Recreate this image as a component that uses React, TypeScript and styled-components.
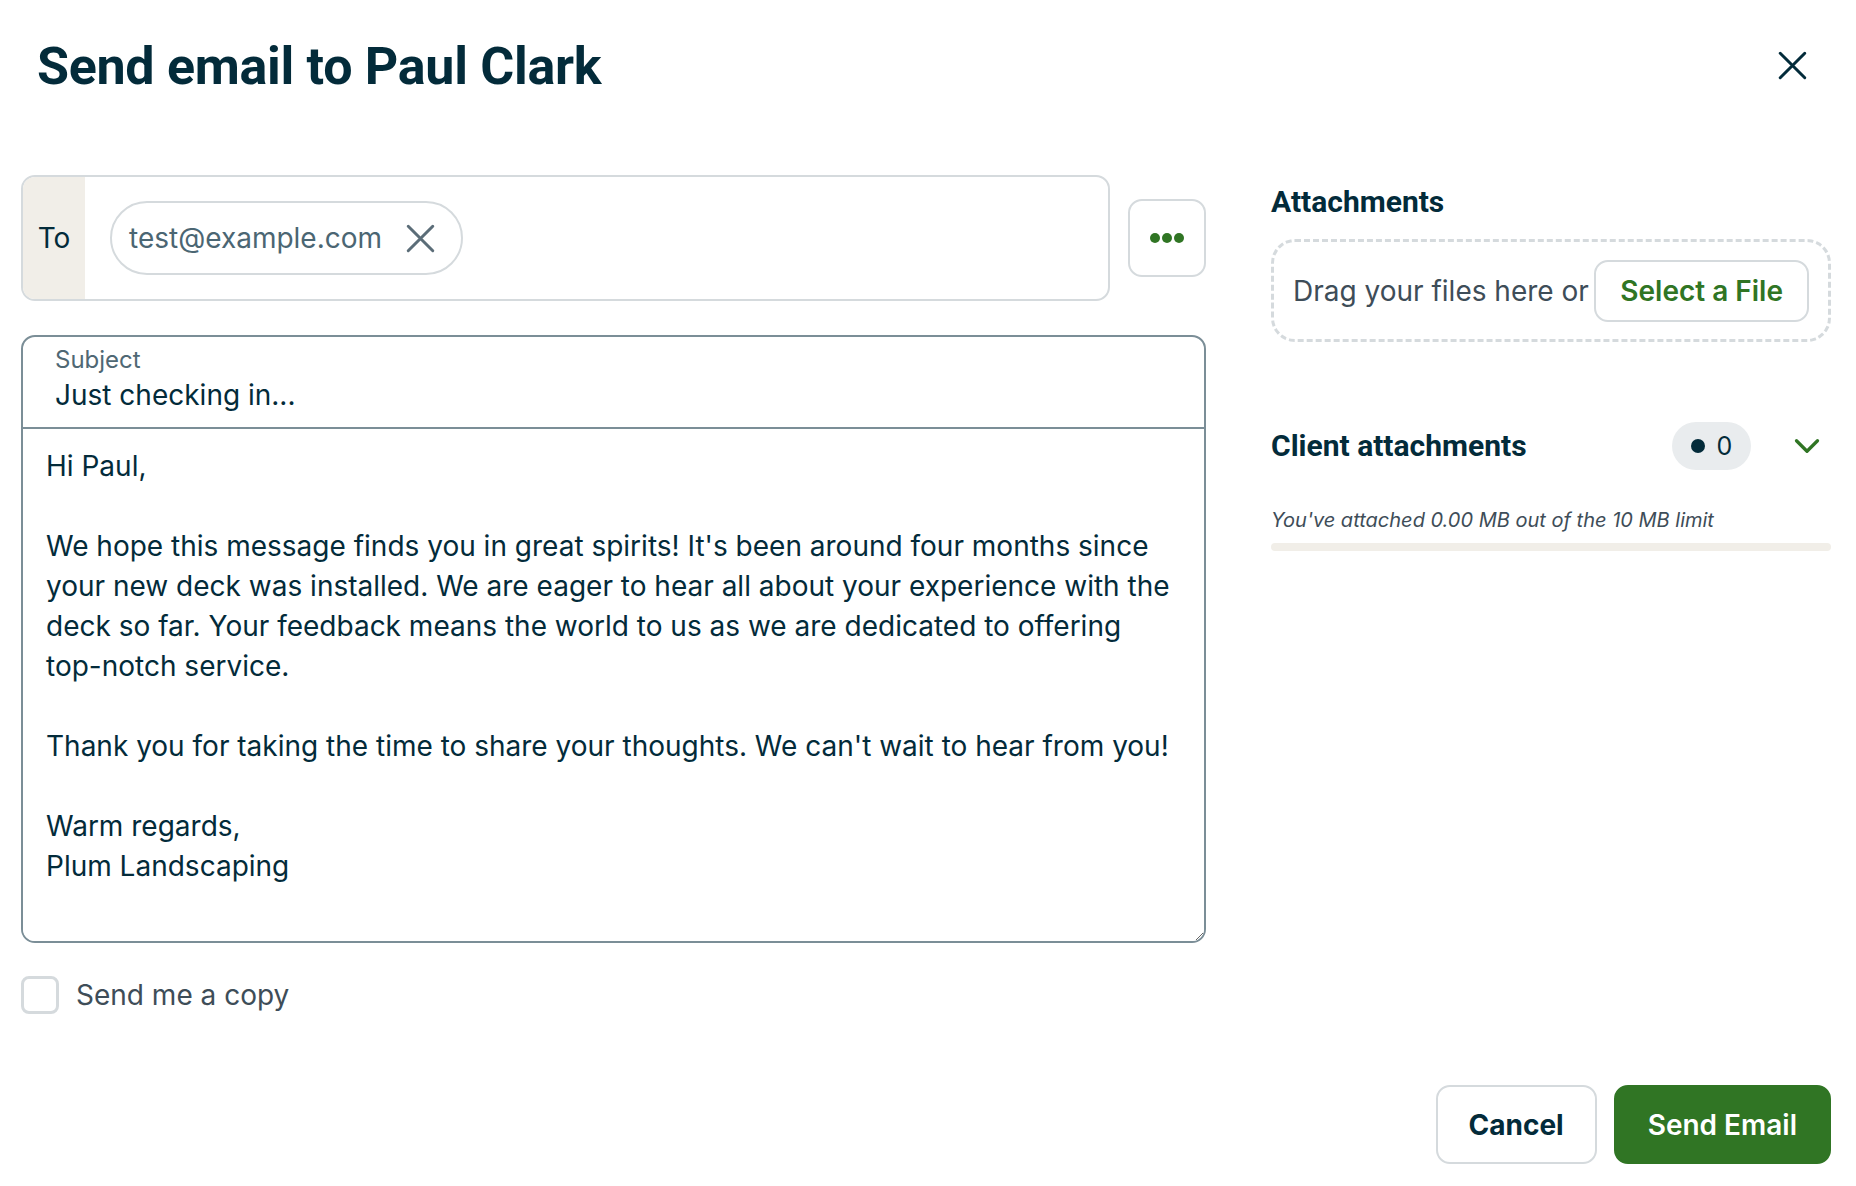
import React, { useState } from "react";
import styled, { createGlobalStyle } from "styled-components";

const GlobalStyle = createGlobalStyle`
    html, body {
        margin: 0;
        padding: 0;
        background: #ffffff;
    }
    body {
        font-family: Inter, "Noto Sans", sans-serif;
        color: #032b3a;
    }
    * {
        box-sizing: border-box;
    }
`;

const messageBody = [
    "Hi Paul,",
    "",
    "We hope this message finds you in great spirits! It's been around four months since",
    "your new deck was installed. We are eager to hear all about your experience with the",
    "deck so far. Your feedback means the world to us as we are dedicated to offering",
    "top-notch service.",
    "",
    "Thank you for taking the time to share your thoughts. We can't wait to hear from you!",
    "",
    "Warm regards,",
    "Plum Landscaping",
].join("\n");

const CloseIcon = ({ size, stroke }: { size: number; stroke: number }) => (
    <svg width={size} height={size} viewBox="0 0 24 24" fill="none">
        <path
            d="M2.5 2.5L21.5 21.5M21.5 2.5L2.5 21.5"
            stroke="currentColor"
            strokeWidth={stroke}
            strokeLinecap="round"
        />
    </svg>
);

const App = () => {
    const [subject, setSubject] = useState("Just checking in...");
    const [body, setBody] = useState(messageBody);
    const [copy, setCopy] = useState(false);
    const usedMb = 0;
    const limitMb = 10;

    return (
        <>
            <GlobalStyle />
            <Dialog>
                <Header>
                    <Title>Send email to Paul Clark</Title>
                    <CloseButton aria-label="Close">
                        <CloseIcon size={31} stroke={2.3} />
                    </CloseButton>
                </Header>

                <Main>
                    <LeftColumn>
                        <RecipientRow>
                            <ToField>
                                <ToLabel>To</ToLabel>
                                <ChipArea>
                                    <Chip>
                                        test@example.com
                                        <ChipRemove aria-label="Remove">
                                            <CloseIcon size={31} stroke={2.3} />
                                        </ChipRemove>
                                    </Chip>
                                </ChipArea>
                            </ToField>
                            <MoreButton aria-label="More options">
                                <svg width="34" height="12" viewBox="0 0 34 12">
                                    <circle cx="5" cy="6" r="5" fill="#307524" />
                                    <circle cx="17" cy="6" r="5" fill="#307524" />
                                    <circle cx="29" cy="6" r="5" fill="#307524" />
                                </svg>
                            </MoreButton>
                        </RecipientRow>

                        <MessageBox>
                            <SubjectField>
                                <SubjectLabel>Subject</SubjectLabel>
                                <SubjectInput
                                    value={subject}
                                    onChange={(e) => setSubject(e.target.value)}
                                />
                            </SubjectField>
                            <BodyInput
                                value={body}
                                wrap="off"
                                onChange={(e) => setBody(e.target.value)}
                            />
                        </MessageBox>

                        <CopyRow>
                            <CheckBox
                                type="checkbox"
                                checked={copy}
                                onChange={() => setCopy(!copy)}
                            />
                            Send me a copy
                        </CopyRow>
                    </LeftColumn>

                    <RightColumn>
                        <FirstHeading>Attachments</FirstHeading>
                        <DropZone>
                            <DropText>Drag your files here or</DropText>
                            <SelectButton>Select a File</SelectButton>
                        </DropZone>

                        <ClientRow>
                            <SectionHeading>Client attachments</SectionHeading>
                            <ClientMeta>
                                <CountBadge>
                                    <Dot />0
                                </CountBadge>
                                <ChevronButton aria-label="Expand">
                                    <svg width="28" height="28" viewBox="0 0 24 24" fill="none">
                                        <path
                                            d="M3 7.5L12 16.5L21 7.5"
                                            stroke="#307524"
                                            strokeWidth="2.8"
                                            strokeLinecap="round"
                                            strokeLinejoin="round"
                                        />
                                    </svg>
                                </ChevronButton>
                            </ClientMeta>
                        </ClientRow>

                        <LimitText>
                            You've attached {usedMb.toFixed(2)} MB out of the {limitMb} MB limit
                        </LimitText>
                        <ProgressTrack>
                            <ProgressFill style={{ width: `${(usedMb / limitMb) * 100}%` }} />
                        </ProgressTrack>
                    </RightColumn>
                </Main>

                <Footer>
                    <SecondaryButton>Cancel</SecondaryButton>
                    <PrimaryButton>Send Email</PrimaryButton>
                </Footer>
            </Dialog>
        </>
    );
};

const Dialog = styled.div`
    width: 1856px;
    height: 1186px;
    padding: 0 25px 0 21px;
    display: flex;
    flex-direction: column;
`;

const Header = styled.header`
    height: 130px;
    display: flex;
    align-items: center;
    justify-content: space-between;
    padding-left: 16px;
`;

const Title = styled.h1`
    margin: 2px 0 0;
    font-family: Roboto, Inter, sans-serif;
    font-weight: 700;
    font-size: 52px;
    letter-spacing: -0.3px;
    color: #032b3a;
`;

const CloseButton = styled.button`
    border: none;
    background: none;
    padding: 0;
    margin-right: 23px;
    display: flex;
    color: #032b3a;
    cursor: pointer;
`;

const Main = styled.div`
    display: grid;
    grid-template-columns: 1185px 1fr;
    column-gap: 65px;
    margin-top: 45px;
`;

const LeftColumn = styled.div`
    display: flex;
    flex-direction: column;
`;

const RecipientRow = styled.div`
    display: flex;
    align-items: center;
    gap: 18px;
`;

const ToField = styled.div`
    flex: 1;
    height: 126px;
    display: flex;
    border: 2px solid #d5dadd;
    border-radius: 14px;
    overflow: hidden;
`;

const ToLabel = styled.div`
    width: 62px;
    background: #f1eee8;
    display: flex;
    align-items: center;
    justify-content: center;
    font-size: 28px;
    color: #032b3a;
`;

const ChipArea = styled.div`
    flex: 1;
    display: flex;
    align-items: center;
    padding-left: 25px;
`;

const Chip = styled.div`
    height: 74px;
    display: flex;
    align-items: center;
    gap: 23px;
    padding: 0 25px 0 17px;
    border: 2px solid #d5dadd;
    border-radius: 37px;
    font-size: 28px;
    color: #4b6673;
`;

const ChipRemove = styled.button`
    border: none;
    background: none;
    padding: 0;
    display: flex;
    color: #5b6d78;
    cursor: pointer;
`;

const MoreButton = styled.button`
    width: 78px;
    height: 78px;
    border: 2px solid #d5dadd;
    border-radius: 14px;
    background: #fff;
    display: flex;
    align-items: center;
    justify-content: center;
    cursor: pointer;
`;

const MessageBox = styled.div`
    margin-top: 34px;
    border: 2px solid #7b8e97;
    border-radius: 14px;
    display: flex;
    flex-direction: column;
    overflow: hidden;
`;

const SubjectField = styled.label`
    height: 92px;
    display: flex;
    flex-direction: column;
    padding: 8px 32px 0;
    border-bottom: 2px solid #7b8e97;
`;

const SubjectLabel = styled.span`
    font-size: 24px;
    line-height: 30px;
    color: #4f6874;
`;

const SubjectInput = styled.input`
    border: none;
    outline: none;
    padding: 0;
    margin-top: 2px;
    font-family: Inter, sans-serif;
    font-size: 28px;
    line-height: 36px;
    color: #032b3a;
    background: transparent;
`;

const BodyInput = styled.textarea`
    height: 512px;
    border: none;
    outline: none;
    resize: vertical;
    overflow: hidden;
    padding: 17px 23px;
    font-family: Inter, sans-serif;
    font-size: 28px;
    line-height: 40px;
    color: #032b3a;
    white-space: pre;
`;

const CopyRow = styled.label`
    margin-top: 33px;
    display: flex;
    align-items: center;
    gap: 17px;
    font-size: 28px;
    color: #3e4d58;
    cursor: pointer;
`;

const CheckBox = styled.input`
    appearance: none;
    margin: 0;
    width: 38px;
    height: 38px;
    border: 3px solid #d5dadd;
    border-radius: 8px;
    background: #fff;
`;

const RightColumn = styled.div`
    display: flex;
    flex-direction: column;
`;

const SectionHeading = styled.h2`
    margin: 0;
    font-family: Roboto, Inter, sans-serif;
    font-weight: 700;
    font-size: 30px;
    line-height: 36px;
    color: #032b3a;
`;

const FirstHeading = styled(SectionHeading)`
    margin-top: 9px;
`;

const DropZone = styled.div`
    margin-top: 19px;
    height: 103px;
    display: flex;
    align-items: center;
    justify-content: space-between;
    padding: 0 19px 0 19px;
    border: 3px dashed #d5dadd;
    border-radius: 24px;
`;

const DropText = styled.span`
    font-size: 28px;
    color: #3e4d58;
`;

const SelectButton = styled.button`
    height: 62px;
    padding: 0 24px;
    border: 2px solid #d5dadd;
    border-radius: 14px;
    background: #fff;
    font-family: Inter, sans-serif;
    font-size: 28px;
    font-weight: 600;
    color: #307524;
    cursor: pointer;
`;

const ClientRow = styled.div`
    margin-top: 80px;
    height: 47px;
    display: flex;
    align-items: center;
    justify-content: space-between;
`;

const ClientMeta = styled.div`
    display: flex;
    align-items: center;
    gap: 42px;
    padding-right: 10px;
`;

const CountBadge = styled.span`
    height: 48px;
    min-width: 79px;
    display: inline-flex;
    align-items: center;
    justify-content: center;
    gap: 12px;
    padding: 0 16px;
    border-radius: 24px;
    background: #e9ecee;
    font-size: 25px;
    color: #032b3a;
`;

const Dot = styled.span`
    width: 14px;
    height: 14px;
    border-radius: 50%;
    background: #032b3a;
`;

const ChevronButton = styled.button`
    border: none;
    background: none;
    padding: 0;
    display: flex;
    cursor: pointer;
`;

const LimitText = styled.p`
    margin: 37px 0 0;
    font-size: 20px;
    line-height: 28px;
    font-style: italic;
    color: #3e4d58;
`;

const ProgressTrack = styled.div`
    margin-top: 9px;
    height: 8px;
    border-radius: 4px;
    background: #f1eee8;
    overflow: hidden;
`;

const ProgressFill = styled.div`
    height: 100%;
    background: #307524;
`;

const Footer = styled.footer`
    margin-top: auto;
    margin-bottom: 22px;
    display: flex;
    justify-content: flex-end;
    gap: 17px;
`;

const SecondaryButton = styled.button`
    height: 79px;
    padding: 0 31px;
    border: 2px solid #d5dadd;
    border-radius: 14px;
    background: #fff;
    font-family: Inter, sans-serif;
    font-size: 28px;
    font-weight: 700;
    color: #032b3a;
    cursor: pointer;
`;

const PrimaryButton = styled(SecondaryButton)`
    padding: 0 32px;
    border-color: #307524;
    background: #307524;
    color: #fff;
    font-weight: 600;
`;

export default App;
